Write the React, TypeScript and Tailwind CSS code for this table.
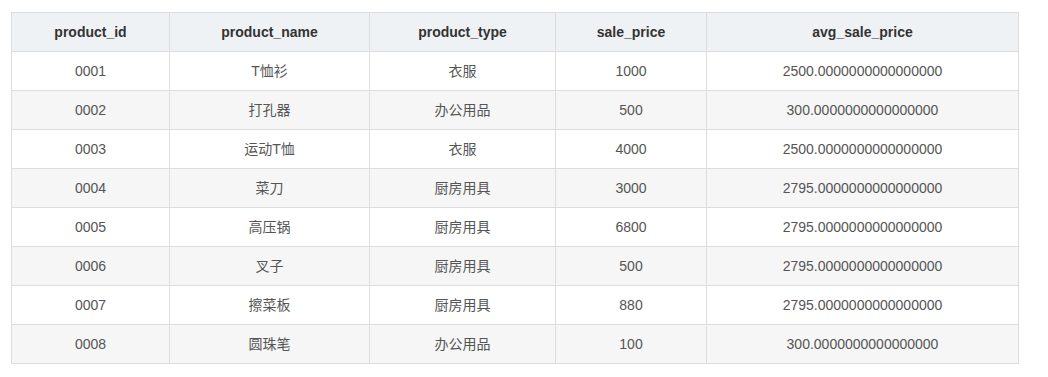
const rows = [
  ['0001', 'T恤衫', '衣服', '1000', '2500.0000000000000000'],
  ['0002', '打孔器', '办公用品', '500', '300.0000000000000000'],
  ['0003', '运动T恤', '衣服', '4000', '2500.0000000000000000'],
  ['0004', '菜刀', '厨房用具', '3000', '2795.0000000000000000'],
  ['0005', '高压锅', '厨房用具', '6800', '2795.0000000000000000'],
  ['0006', '叉子', '厨房用具', '500', '2795.0000000000000000'],
  ['0007', '擦菜板', '厨房用具', '880', '2795.0000000000000000'],
  ['0008', '圆珠笔', '办公用品', '100', '300.0000000000000000'],
];

const headers = ['product_id', 'product_name', 'product_type', 'sale_price', 'avg_sale_price'];
const widths = ['w-[158px]', 'w-[200px]', 'w-[186px]', 'w-[151px]', 'w-[312px]'];

export default function App() {
  return (
    <div className="bg-white w-[1048px] h-[377px] pt-[12px] pl-[11px] font-['Liberation_Sans','Noto_Sans_CJK_SC',sans-serif] text-[14px]">
      <table className="border-collapse table-fixed w-[1008px]">
        <thead>
          <tr className="bg-[#eff2f5]">
            {headers.map((h, i) => (
              <th
                key={h}
                className={`${widths[i]} h-[39px] pt-[1px] border border-[#dddddd] text-center font-bold text-[#333333]`}
              >
                {h}
              </th>
            ))}
          </tr>
        </thead>
        <tbody>
          {rows.map((r, idx) => (
            <tr key={r[0]} className={idx % 2 === 1 ? 'bg-[#f6f6f6]' : 'bg-white'}>
              {r.map((c, i) => (
                <td key={i} className="h-[39px] pt-[1px] border border-[#dddddd] text-center text-[#555555]">
                  {c}
                </td>
              ))}
            </tr>
          ))}
        </tbody>
      </table>
    </div>
  );
}
